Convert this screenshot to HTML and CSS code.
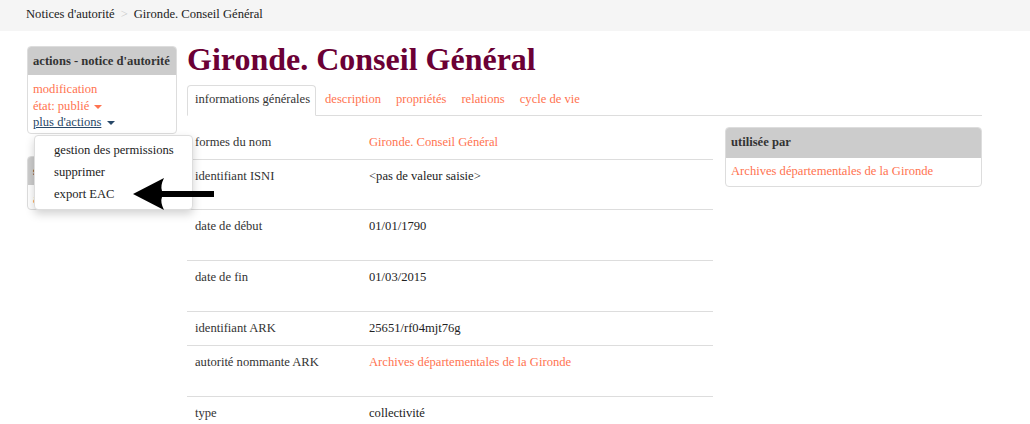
FILE: index.html
```html
<!DOCTYPE html>
<html lang="fr">
<head>
<meta charset="utf-8">
<title>Gironde. Conseil Général</title>
<link rel="stylesheet" href="styles.css">
</head>
<body>
<div class="breadcrumb">
  <a class="crumb" href="#">Notices d'autorité</a>
  <span class="sep">&gt;</span>
  <span class="crumb">Gironde. Conseil Général</span>
</div>
<div class="page">
  <aside class="side">
    <div class="box">
      <div class="box-head">actions - notice d'autorité</div>
      <div class="box-body">
        <a class="link" href="#">modification</a>
        <a class="link" href="#">état: publié <span class="caret caret-orange"></span></a>
        <div class="more">
          <a class="more-link" href="#">plus d'actions</a> <span class="caret caret-blue"></span>
          <ul class="menu">
            <li>gestion des permissions</li>
            <li>supprimer</li>
            <li>export EAC</li>
          </ul>
          <svg class="arrow" width="82" height="32" viewBox="0 0 82 32">
            <path d="M0 16 L31 0 Q27 8 29 13 L81 13 L81 19 L29 19 Q27 24 31 32 Z" fill="#000"/>
          </svg>
        </div>
      </div>
    </div>
    <div class="box box2">
      <div class="box-head">s</div>
      <div class="box-body">
        <a class="link" href="#">a</a>
      </div>
    </div>
  </aside>
  <main class="main">
    <h1 class="title">Gironde. Conseil Général</h1>
    <nav class="tabs">
      <span class="tab active">informations générales</span>
      <a class="tab" href="#">description</a>
      <a class="tab" href="#">propriétés</a>
      <a class="tab" href="#">relations</a>
      <a class="tab" href="#">cycle de vie</a>
    </nav>
    <div class="content">
      <div class="table">
        <div class="row"><div class="label">formes du nom</div><div class="value"><a class="link" href="#">Gironde. Conseil Général</a></div></div>
        <div class="row tall"><div class="label">identifiant ISNI</div><div class="value">&lt;pas de valeur saisie&gt;</div></div>
        <div class="row tall"><div class="label">date de début</div><div class="value">01/01/1790</div></div>
        <div class="row tall"><div class="label">date de fin</div><div class="value">01/03/2015</div></div>
        <div class="row"><div class="label">identifiant ARK</div><div class="value">25651/rf04mjt76g</div></div>
        <div class="row tall"><div class="label">autorité nommante ARK</div><div class="value"><a class="link" href="#">Archives départementales de la Gironde</a></div></div>
        <div class="row"><div class="label">type</div><div class="value">collectivité</div></div>
      </div>
      <div class="box used">
        <div class="box-head">utilisée par</div>
        <div class="box-body">
          <a class="link" href="#">Archives départementales de la Gironde</a>
        </div>
      </div>
    </div>
  </main>
</div>
</body>
</html>
```
FILE: styles.css
```css
* { box-sizing: border-box; }
html, body { margin: 0; padding: 0; }
body {
  font-family: "Liberation Serif", "Times New Roman", serif;
  font-size: 12.6px;
  line-height: 17px;
  color: #333;
  background: #fff;
  overflow: hidden;
}
a { text-decoration: none; }

.breadcrumb {
  height: 31px;
  background: #f5f5f5;
  padding: 6px 0 0 26px;
  display: flex;
  gap: 6px;
}
.crumb { color: #222; }
.sep { color: #c8c8c8; }

.page {
  display: flex;
  gap: 10px;
  padding: 7px 0 0 27px;
}
.side {
  width: 150px;
  flex: none;
  padding-top: 8px;
  display: flex;
  flex-direction: column;
  gap: 22px;
}
.box {
  border: 1px solid #ddd;
  border-radius: 4px;
  background: #fff;
}
.box-head {
  background: #ccc;
  font-weight: bold;
  color: #333;
  height: 28px;
  padding: 6px 5px 0;
  border-radius: 3px 3px 0 0;
  white-space: nowrap;
}
.box-body {
  padding: 6px 5px 2px;
  display: flex;
  flex-direction: column;
  line-height: 16.5px;
}
.link { color: #ff7350; }
.more { position: relative; }
.more-link { color: #284868; text-decoration: underline; }
.caret {
  display: inline-block;
  width: 0; height: 0;
  border-left: 4px solid transparent;
  border-right: 4px solid transparent;
  vertical-align: 1px;
  margin-left: 2px;
}
.caret-orange { border-top: 4px solid #ff7350; }
.caret-blue { border-top: 4px solid #284868; }

.menu {
  position: absolute;
  left: 1px;
  top: 21px;
  width: 159px;
  margin: 0;
  padding: 3px 0 4px;
  list-style: none;
  background: #fff;
  border: 1px solid #ddd;
  border-radius: 4px;
  box-shadow: 0 4px 10px rgba(0,0,0,0.18);
  z-index: 5;
}
.menu li {
  line-height: 22px;
  padding-left: 19px;
  color: #222;
}
.arrow {
  position: absolute;
  left: 100px;
  top: 64px;
  z-index: 6;
}

.main {
  width: 795px;
  flex: none;
}
.title {
  margin: 2px 0 0;
  font-size: 32px;
  line-height: 38px;
  font-weight: bold;
  color: #6b0035;
  height: 45px;
}
.tabs {
  display: flex;
  border-bottom: 1px solid #ddd;
  height: 31px;
}
.tab {
  height: 31px;
  padding: 5px 5px 0 7px;
  margin-right: 1px;
  color: #ff7350;
  border: 1px solid transparent;
  border-radius: 4px 4px 0 0;
}
.tab.active {
  color: #333;
  border-color: #ddd;
  border-bottom-color: #fff;
  background: #fff;
}
.content {
  display: flex;
  gap: 12px;
  align-items: flex-start;
  padding-top: 10px;
}
.table { width: 526px; flex: none; }
.row {
  display: grid;
  grid-template-columns: 182px 1fr;
  border-top: 1px solid #ddd;
  padding: 8px 0 8px;
  min-height: 33px;
}
.row:first-child { border-top: none; min-height: 33px; padding-top: 8px; }
.row.tall { min-height: 51px; }
.row.tall:nth-child(2) { min-height: 50px; }
.label { padding-left: 8px; color: #333; }
.value { padding-left: 0; color: #222; }
.used {
  width: 257px;
  margin-top: 1px;
}
.used .box-head { height: 30px; padding-top: 6px; }
.used .box-body { padding: 5px 5px 6px; }
```
